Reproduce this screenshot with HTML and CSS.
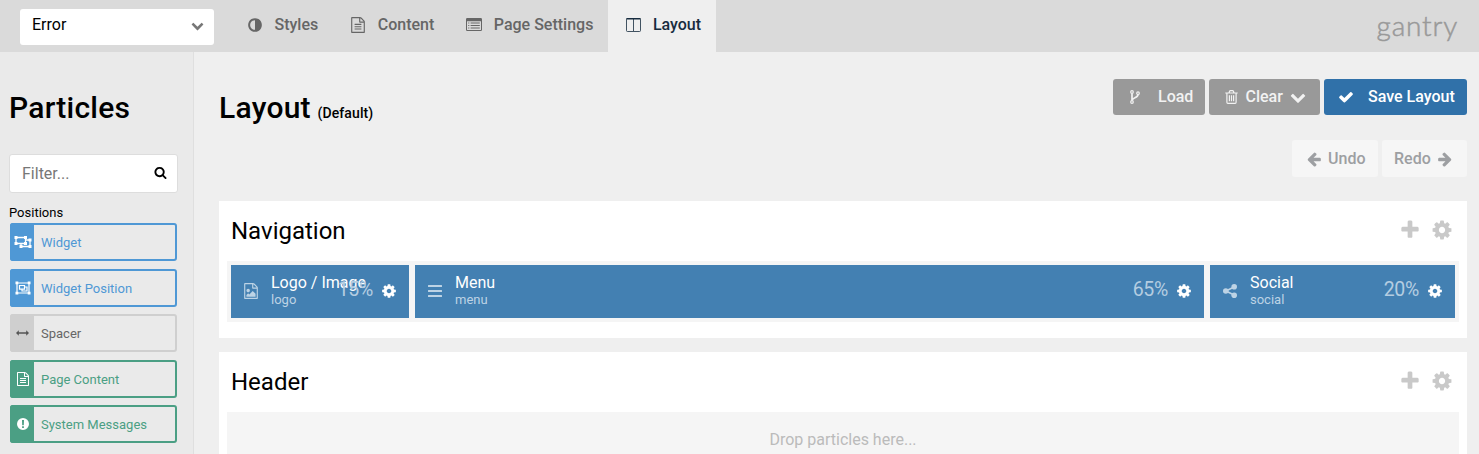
FILE: index.html
```html
<!DOCTYPE html>
<html lang="en">
<head>
<meta charset="utf-8">
<title>Layout</title>
<link rel="stylesheet" href="styles.css">
</head>
<body>
<svg class="defs" width="0" height="0">
<symbol id="cog" viewBox="0 0 1792 1792"><path fill-rule="evenodd" d="M1152 896q0 106-75 181t-181 75-181-75-75-181 75-181 181-75 181 75 75 181zM1664 787v222q0 12-8 23t-20 13l-185 28q-19 54-39 91 35 50 107 138 10 12 10 25t-9 23q-27 37-99 108t-94 71q-12 0-26-9l-138-108q-44 23-91 38-16 136-29 186-7 28-36 28h-222q-14 0-24.500-8.500t-11.500-21.500l-28-184q-49-16-90-37l-141 107q-10 9-25 9-14 0-25-11-126-114-165-168-7-10-7-23 0-12 8-23 15-21 51-66.500t54-70.500q-27-50-41-99l-183-27q-13-2-21-12.500t-8-23.500v-222q0-12 8-23t19-13l186-28q14-46 39-92-40-57-107-138-10-12-10-24 0-10 9-23 26-36 98.500-107.500t94.500-71.500q13 0 26 10l138 107q44-23 91-38 16-136 29-186 7-28 36-28h222q14 0 24.500 8.500t11.500 21.500l28 184q49 16 90 37l142-107q9-9 24-9 13 0 25 10 129 119 165 170 7 8 7 22 0 12-8 23-15 21-51 66.500t-54 70.500q26 50 41 98l183 28q13 2 21 12.500t8 23.500z"/></symbol>
<symbol id="check" viewBox="0 0 1792 1792"><path d="M1671 566q0 40-28 68l-724 724-136 136q-28 28-68 28t-68-28l-136-136-362-362q-28-28-28-68t28-68l136-136q28-28 68-28t68 28l294 295 656-657q28-28 68-28t68 28l136 136q28 28 28 68z"/></symbol>
<symbol id="down" viewBox="0 0 1792 1792"><path d="M1683 808l-742 741q-19 19-45 19t-45-19l-742-741q-19-19-19-45.5t19-45.5l166-165q19-19 45-19t45 19l531 531 531-531q19-19 45-19t45 19l166 165q19 19 19 45.5t-19 45.5z"/></symbol>
<symbol id="plus" viewBox="0 0 1792 1792"><path d="M1600 736v192q0 40-28 68t-68 28h-416v416q0 40-28 68t-68 28h-192q-40 0-68-28t-28-68v-416h-416q-40 0-68-28t-28-68v-192q0-40 28-68t68-28h416v-416q0-40 28-68t68-28h192q40 0 68 28t28 68v416h416q40 0 68 28t28 68z"/></symbol>
<symbol id="left" viewBox="0 0 1792 1792"><path d="M1664 896v128q0 53-32.5 90.5t-84.5 37.5h-704l293 294q38 36 38 90t-38 90l-75 76q-37 37-90 37-52 0-91-37l-651-652q-37-37-37-90 0-52 37-91l651-650q38-38 91-38 52 0 90 38l75 74q38 38 38 91t-38 91l-293 293h704q52 0 84.5 37.5t32.5 90.5z"/></symbol>
<symbol id="search" viewBox="0 0 1792 1792"><path d="M1216 832q0-185-131.5-316.5t-316.5-131.5-316.5 131.5-131.5 316.5 131.5 316.5 316.5 131.5 316.5-131.5 131.5-316.5zm512 832q0 52-38 90t-90 38q-54 0-90-38l-343-342q-179 124-399 124-143 0-273.5-55.5t-225-150-150-225-55.5-273.5 55.5-273.5 150-225 225-150 273.5-55.5 273.5 55.5 225 150 150 225 55.5 273.5q0 220-124 399l343 343q37 37 37 90z"/></symbol>
<symbol id="adjust" viewBox="0 0 1792 1792"><path d="M896 1440v-1088q-148 0-273 73t-198 198-73 273 73 273 198 198 273 73zm768-544q0 209-103 385.5t-279.5 279.5-385.5 103-385.5-103-279.5-279.5-103-385.5 103-385.5 279.5-279.5 385.5-103 385.5 103 279.5 279.5 103 385.5z"/></symbol>
<symbol id="file" viewBox="0 0 1792 1792"><path d="M1596 380q28 28 48 76t20 88v1152q0 40-28 68t-68 28h-1344q-40 0-68-28t-28-68v-1600q0-40 28-68t68-28h896q40 0 88 20t76 48zm-444-244v376h376q-10-29-22-41l-313-313q-12-12-41-22zm384 1528v-1024h-416q-40 0-68-28t-28-68v-416h-768v1536h1280zm-1024-864q0-14 9-23t23-9h704q14 0 23 9t9 23v64q0 14-9 23t-23 9h-704q-14 0-23-9t-9-23v-64zm736 224q14 0 23 9t9 23v64q0 14-9 23t-23 9h-704q-14 0-23-9t-9-23v-64q0-14 9-23t23-9h704zm0 256q14 0 23 9t9 23v64q0 14-9 23t-23 9h-704q-14 0-23-9t-9-23v-64q0-14 9-23t23-9h704z"/></symbol>
<symbol id="image" viewBox="0 0 1792 1792"><path d="M1596 380q28 28 48 76t20 88v1152q0 40-28 68t-68 28h-1344q-40 0-68-28t-28-68v-1600q0-40 28-68t68-28h896q40 0 88 20t76 48zm-444-244v376h376q-10-29-22-41l-313-313q-12-12-41-22zm384 1528v-1024h-416q-40 0-68-28t-28-68v-416h-768v1536h1280zm-128-448v320h-1024v-192l192-192 128 128 384-384zm-832-192q-80 0-136-56t-56-136 56-136 136-56 136 56 56 136-56 136-136 56z"/></symbol>
<symbol id="list" viewBox="0 0 16 14"><path fill-rule="evenodd" d="M1.3 0h13.4Q16 0 16 1.3v10.4q0 1.3-1.3 1.3H1.3Q0 13 0 11.7V1.3Q0 0 1.3 0zM1 3.3v8.4q0 .4.4.4h13.2q.4 0 .4-.4V3.3z"/><path d="M2.2 4.6h1.1v1H2.2zM4.6 4.6h9.2v1H4.6zM2.2 7h1.1v1H2.2zM4.6 7h9.2v1H4.6zM2.2 9.4h1.1v1H2.2zM4.6 9.4h9.2v1H4.6z"/></symbol>
<symbol id="columns" viewBox="0 0 15 14"><rect x=".5" y=".5" width="14" height="13" rx=".9" fill="none" stroke="currentColor" stroke-width="1" opacity=".8"/><path d="M.5 0h14v1.500H.5z"/><path d="M7 1h1v12H7z" opacity=".8"/></symbol>
<symbol id="fork" viewBox="0 0 10 14"><g fill="none" stroke="currentColor" stroke-width="1.2"><circle cx="2" cy="2" r="1.3"/><circle cx="2" cy="12" r="1.3"/><circle cx="8" cy="3.2" r="1.3"/></g><path d="M2 3.500v7M8 4.600C8 8.600 2.300 7 2.100 10.500" fill="none" stroke="currentColor" stroke-width="1.7"/></symbol>
<symbol id="trash" viewBox="0 0 13 14"><g fill="none" stroke="currentColor" stroke-width="1.2"><path d="M.3 3h12.400M1.900 3v9.200q0 1.200 1 1.200h7.200q1 0 1-1.200V3M4 2.800l.8-1.900q.2-.3.5-.3h2.400q.3 0 .5.300l.8 1.900M4.400 5.200v6M6.500 5.200v6M8.600 5.200v6"/></g></symbol>
<symbol id="bars" viewBox="0 0 14 12"><path d="M.5 0h13q.5 0 .5.500v1q0 .5-.5.500H.5Q0 2 0 1.500v-1Q0 0 .5 0zM.5 5h13q.5 0 .5.500v1q0 .5-.5.500H.5Q0 7 0 6.500v-1Q0 5 .5 5zM.5 10h13q.5 0 .5.500v1q0 .5-.5.500H.5q-.5 0-.5-.500v-1q0-.5.5-.500z"/></symbol>
<symbol id="share" viewBox="0 0 14 14"><circle cx="2.8" cy="7" r="2.8"/><circle cx="11.2" cy="2.8" r="2.8"/><circle cx="11.2" cy="11.2" r="2.8"/><path d="M11.100 2.900L2.900 7l8.200 4.100" fill="none" stroke="currentColor" stroke-width="1.7"/></symbol>
<symbol id="group" viewBox="0 0 18 14"><g fill="none" stroke="currentColor" stroke-width="1.3"><path d="M2 2.500h9.500v6H2zM11.500 5H16v6.500H7V8.500"/></g><path d="M.5 1h3v3h-3zM10 1h3v3h-3zM.5 7h3v3h-3zM10 7h3v3h-3zM14.500 3.500h3v3h-3zM14.500 10h3v3h-3zM5.500 10h3v3h-3z"/></symbol>
<symbol id="nested" viewBox="0 0 16 14"><g fill="none" stroke="currentColor" stroke-width="1.2"><path d="M2 2h12v10H2zM4.500 4.500h5v3.700h-5zM9.800 6H12v4H7V8.500"/></g><path d="M.5.500h2.800v2.800H.5zM12.700.500h2.800v2.800h-2.800zM.5 10.700h2.800v2.800H.5zM12.700 10.700h2.800v2.800h-2.800z"/></symbol>
<symbol id="arrows" viewBox="0 0 14 6"><path d="M0 3l3-3v2.100h8V0l3 3-3 3V3.900H3V6z"/></symbol>
<symbol id="alert" viewBox="0 0 12 12"><path fill-rule="evenodd" d="M6 0a6 6 0 100 12A6 6 0 006 0zM5 2.100h2L6.800 7.200H5.200zM5.100 8.200h1.800V10H5.100z"/></symbol>
</svg>

<header class="topbar">
  <div class="select">Error<svg class="select-arrow"><use href="#down"/></svg></div>
  <nav class="tabs">
    <a class="tab"><span class="slot"><svg class="i16"><use href="#adjust"/></svg></span>Styles</a>
    <a class="tab"><span class="slot"><svg class="i16"><use href="#file"/></svg></span>Content</a>
    <a class="tab"><span class="slot"><svg class="i-list"><use href="#list"/></svg></span>Page Settings</a>
    <a class="tab active"><span class="slot"><svg class="i-columns"><use href="#columns"/></svg></span>Layout</a>
  </nav>
  <div class="brand">gantry</div>
</header>

<div class="page">
  <aside class="sidebar">
    <h1 class="title">Particles</h1>
    <div class="filter"><span>Filter...</span><svg class="i-search"><use href="#search"/></svg></div>
    <div class="label">Positions</div>
    <ul class="particles">
      <li class="particle blue"><span class="grip"><svg class="i-group"><use href="#group"/></svg></span>Widget</li>
      <li class="particle blue"><span class="grip"><svg class="i-nested"><use href="#nested"/></svg></span>Widget Position</li>
      <li class="particle gray"><span class="grip"><svg class="i-arrows"><use href="#arrows"/></svg></span>Spacer</li>
      <li class="particle green"><span class="grip"><svg class="i14"><use href="#file"/></svg></span>Page Content</li>
      <li class="particle green"><span class="grip"><svg class="i-alert"><use href="#alert"/></svg></span>System Messages</li>
    </ul>
  </aside>
  <main class="main">
    <div class="heading">
      <h1 class="title">Layout <small>(Default)</small></h1>
      <div class="actions">
        <div class="buttons">
          <a class="btn load"><svg class="i-fork"><use href="#fork"/></svg>Load</a>
          <a class="btn clear"><svg class="i-trash"><use href="#trash"/></svg>Clear<svg class="i16"><use href="#down"/></svg></a>
          <a class="btn save"><svg class="i16"><use href="#check"/></svg>Save Layout</a>
        </div>
        <div class="buttons">
          <a class="btn light undo"><svg class="i16"><use href="#left"/></svg>Undo</a>
          <a class="btn light redo">Redo<svg class="i16 flip"><use href="#left"/></svg></a>
        </div>
      </div>
    </div>
    <section class="section">
      <div class="section-head"><h2>Navigation</h2><span class="tools"><svg><use href="#plus"/></svg><svg><use href="#cog"/></svg></span></div>
      <div class="grid">
        <div class="block logo"><span class="bicon"><svg class="i16"><use href="#image"/></svg></span><span class="name">Logo / Image<small>logo</small></span><span class="size">15%</span><svg class="i16"><use href="#cog"/></svg></div>
        <div class="block menu"><span class="bicon"><svg class="i-bars"><use href="#bars"/></svg></span><span class="name">Menu<small>menu</small></span><span class="size">65%</span><svg class="i16"><use href="#cog"/></svg></div>
        <div class="block social"><span class="bicon"><svg class="i14"><use href="#share"/></svg></span><span class="name">Social<small>social</small></span><span class="size">20%</span><svg class="i16"><use href="#cog"/></svg></div>
      </div>
    </section>
    <section class="section">
      <div class="section-head"><h2>Header</h2><span class="tools"><svg><use href="#plus"/></svg><svg><use href="#cog"/></svg></span></div>
      <div class="drop">Drop particles here...</div>
    </section>
  </main>
</div>
</body>
</html>
```
FILE: styles.css
```css
* { box-sizing: border-box; }
body { margin: 0; height: 454px; overflow: hidden; background: #efefef; color: #000; font: 400 16px/24px Roboto, sans-serif; }
svg { fill: currentColor; flex: none; display: block; }
.defs { position: absolute; }
h1, h2, ul { margin: 0; padding: 0; list-style: none; }
.i16 { width: 16px; height: 16px; }
.i14 { width: 14px; height: 14px; }
.i-list { width: 16px; height: 14px; }
.i-columns { width: 15px; height: 14px; }
.i-fork { width: 10px; height: 14px; }
.i-trash { width: 13px; height: 14px; }
.i-bars { width: 14px; height: 12px; }
.i-group { width: 18px; height: 14px; }
.i-nested { width: 16px; height: 14px; }
.i-arrows { width: 13px; height: 6px; }
.i-alert { width: 12px; height: 12px; }
.i-search { width: 13px; height: 13px; }
.flip { transform: scaleX(-1); }

.topbar { height: 52px; background: #dadada; display: flex; }
.select { width: 194px; height: 36px; margin: 9px 16px 0 20px; padding: 0 10px 4px 12px; background: #fff; border-radius: 3px; display: flex; align-items: center; justify-content: space-between; }
.select-arrow { width: 13px; height: 13px; color: #777; }
.tabs { display: flex; font-weight: 500; color: #666; }
.tab { display: flex; align-items: center; padding: 0 15px 3px 16px; }
.tab.active { background: #efefef; color: #172c3f; }
.slot { width: 28.5px; padding-right: 11px; display: flex; justify-content: center; }
.brand { margin-left: auto; padding: 8px 21px 0 0; color: #999; font: 300 28px/34px Lato, sans-serif; letter-spacing: .8px; -webkit-text-stroke: .5px #999; }

.page { display: flex; height: 402px; overflow: hidden; }
.sidebar { width: 194px; flex: none; padding: 37px 16px 0 9px; background: #eaeaea; border-right: 1px solid #dfdfdf; }
.title { font-size: 30px; font-weight: 500; line-height: 38px; letter-spacing: .25px; }
.title small { font-size: 14px; letter-spacing: .1px; margin-left: -1px; }
.filter { width: 169px; height: 39px; margin-top: 27px; padding: 0 10px 0 12px; border: 1px solid #ddd; border-radius: 3px; background: #fff; color: #777; display: flex; align-items: center; justify-content: space-between; }
.filter svg { color: #000; margin-top: -2px; }
.label { margin: 11px 0 2px; font-size: 13px; line-height: 17px; }
.particles { display: grid; gap: 7.5px; margin-left: 1px; width: 167px; }
.particle { height: 38px; border: 2px solid; border-radius: 3px; display: flex; align-items: center; font-size: 13px; line-height: 25px; padding-top: 1px; }
.grip { width: 24px; height: 38px; margin: -1px 7px 0 -2px; flex: none; display: flex; align-items: center; justify-content: center; padding-left: 1px; color: #fff; border-radius: 3px 0 0 3px; }
.blue { color: #4f98d5; border-color: #4f98d5; }
.blue .grip { background: #4f98d5; }
.gray { color: #666; border-color: #cfcfcf; }
.gray .grip { background: #cfcfcf; color: #555; }
.green { color: #4b9f84; border-color: #4b9f84; }
.green .grip { background: #4b9f84; }

.main { flex: 1; padding: 27px 12px 0 25px; }
.heading { display: flex; justify-content: space-between; height: 122px; }
.heading .title { margin-top: 10px; }
.actions { display: grid; gap: 25px; align-content: start; }
.buttons { display: flex; justify-content: flex-end; gap: 4px; }
.btn { height: 36px; border-radius: 3px; display: flex; align-items: center; font-weight: 500; background: #999; color: #f2f2f2; }
.load { width: 92px; padding-left: 17px; gap: 18px; }
.clear { width: 111px; padding-left: 16px; gap: 7.5px; }
.save { width: 143px; padding-left: 14px; gap: 14px; background: #3071a9; color: #fff; }
.light { height: 37px; background: #f6f6f6; color: #9d9fa2; }
.undo { width: 86px; padding-left: 14px; gap: 6px; }
.redo { width: 85px; padding-left: 12px; gap: 6px; }

.section { background: #fff; padding: 0 8px; margin-bottom: 14px; height: 137px; }
.section-head { height: 60px; padding: 0 6px 0 4px; display: flex; align-items: center; justify-content: space-between; }
h2 { font-size: 24px; font-weight: 400; line-height: 30px; }
.tools { display: flex; gap: 10px; color: #c9c9c9; padding-bottom: 2px; }
.tools svg { width: 22px; height: 22px; }
.grid { background: #f5f5f5; height: 61px; padding: 4px; display: flex; gap: 6px; }
.block { background: #4380b2; color: #fff; display: flex; align-items: center; padding: 0 12px 2px; height: 53px; min-width: 0; }
.block > .i16 { margin-left: 8px; }
.logo { width: 178px; }
.menu { width: 789px; }
.social { width: 245px; }
.bicon { width: 16px; margin-right: 12px; display: flex; justify-content: center; color: #bdd3e5; flex: none; }
.name { flex: 1; min-width: 0; white-space: nowrap; line-height: 19px; padding-bottom: 1px; }
.name small { display: block; font-size: 13px; line-height: 15px; color: #bdd3e5; }
.size { font-size: 19.5px; letter-spacing: -.3px; color: #b4cde1; padding-bottom: 2px; }
.drop { height: 61px; background: #f5f5f5; color: #bbb; text-align: center; line-height: 56px; }
```
